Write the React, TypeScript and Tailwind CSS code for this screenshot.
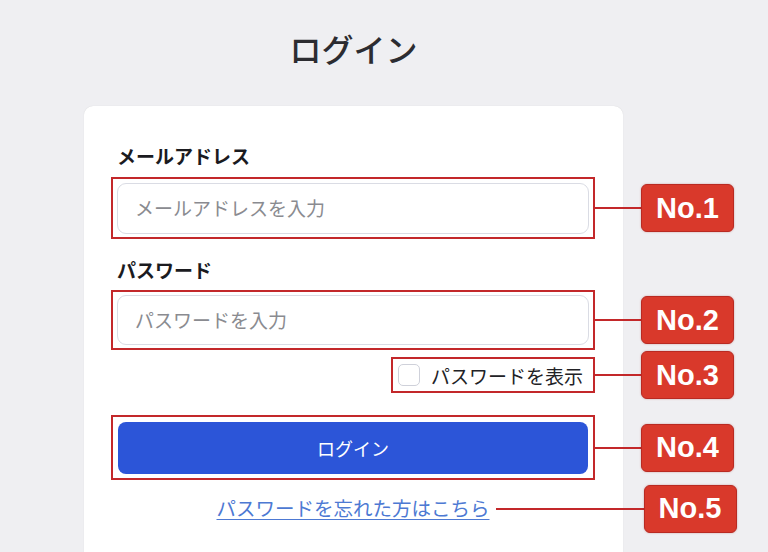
import React from "react";

const JP = { fontFamily: '"Noto Sans CJK JP", "Noto Sans", sans-serif' };

function Badge({ n, line }: { n: number; line: number }) {
  return (
    <div className="absolute left-full top-1/2 -translate-y-1/2 flex items-center">
      <div className="h-[2px] bg-[#c3282a]" style={{ width: line }} />
      <div
        className="flex h-[48px] w-[93px] items-center justify-center rounded-[6px] border border-[#b92a22] bg-[#d9392b] text-[29px] font-bold leading-none text-white shadow-[0_0_2px_rgba(160,30,20,0.4)]"
        style={{ fontFamily: '"Liberation Sans", Arial, sans-serif' }}
      >
        No.{n}
      </div>
    </div>
  );
}

export default function App() {
  return (
    <div
      className="relative h-[552px] w-[768px] overflow-hidden bg-[#efeff2] pt-[28px]"
      style={JP}
    >
      <div className="ml-[84px] w-[539px]">
        <h1 className="text-center text-[32px] font-medium leading-[40px] text-[#2c2c31]">
          ログイン
        </h1>
        <div className="mt-[38px] h-[480px] rounded-[9px] bg-white pl-[27px] pr-[28px] pt-[38px] shadow-[0_0_1px_rgba(0,0,0,0.15)]">
          <div className="w-[484px]">
            <div className="pl-[6px] text-[19px] font-bold leading-[24px] text-[#1b1b1f]">
              メールアドレス
            </div>
            <div className="relative mt-[9px] border-2 border-[#c3282a] px-[4px] pt-[4px] pb-[3px]">
              <div className="flex h-[51px] items-center rounded-[9px] border border-[#dadce4] bg-white pl-[17px] text-[19px] text-[#8a8b90]">
                メールアドレスを入力
              </div>
              <Badge n={1} line={48} />
            </div>

            <div className="mt-[19px] pl-[6px] text-[19px] font-bold leading-[24px] text-[#1b1b1f]">
              パスワード
            </div>
            <div className="relative mt-[8px] border-2 border-[#c3282a] px-[4px] pt-[3px] pb-[3px]">
              <div className="flex h-[50px] items-center rounded-[9px] border border-[#dadce4] bg-white pl-[17px] text-[19px] text-[#8a8b90]">
                パスワードを入力
              </div>
              <Badge n={2} line={48} />
            </div>

            <div className="mt-[7px] flex justify-end">
              <div className="relative flex h-[36px] w-[204px] items-center border-2 border-[#c3282a] pl-[5px]">
                <div className="h-[22px] w-[22px] rounded-[5px] border-[1.5px] border-[#cfd1da] bg-white" />
                <span className="ml-[11px] text-[19px] leading-none text-[#222226]">
                  パスワードを表示
                </span>
                <Badge n={3} line={48} />
              </div>
            </div>

            <div className="relative mt-[22px] border-2 border-[#c3282a] px-[5px] pt-[5px] pb-[4px]">
              <div className="flex h-[52px] items-center justify-center rounded-[8px] bg-[#2c55d8] text-[18px] text-white">
                ログイン
              </div>
              <Badge n={4} line={48} />
            </div>

            <div className="mt-[16px] flex justify-center">
              <span className="relative leading-[24px]">
                <a className="text-[19.5px] text-[#4d79d3] underline decoration-[#4d79d3] underline-offset-[3px]">
                  パスワードを忘れた方はこちら
                </a>
                <span className="absolute left-full top-1/2 -translate-y-1/2 ml-[6px] flex items-center">
                  <span className="block h-[2px] w-[148px] bg-[#c3282a]" />
                  <span
                    className="flex h-[48px] w-[93px] items-center justify-center rounded-[6px] border border-[#b92a22] bg-[#d9392b] text-[29px] font-bold leading-none text-white shadow-[0_0_2px_rgba(160,30,20,0.4)]"
                    style={{ fontFamily: '"Liberation Sans", Arial, sans-serif' }}
                  >
                    No.5
                  </span>
                </span>
              </span>
            </div>
          </div>
        </div>
      </div>
    </div>
  );
}
